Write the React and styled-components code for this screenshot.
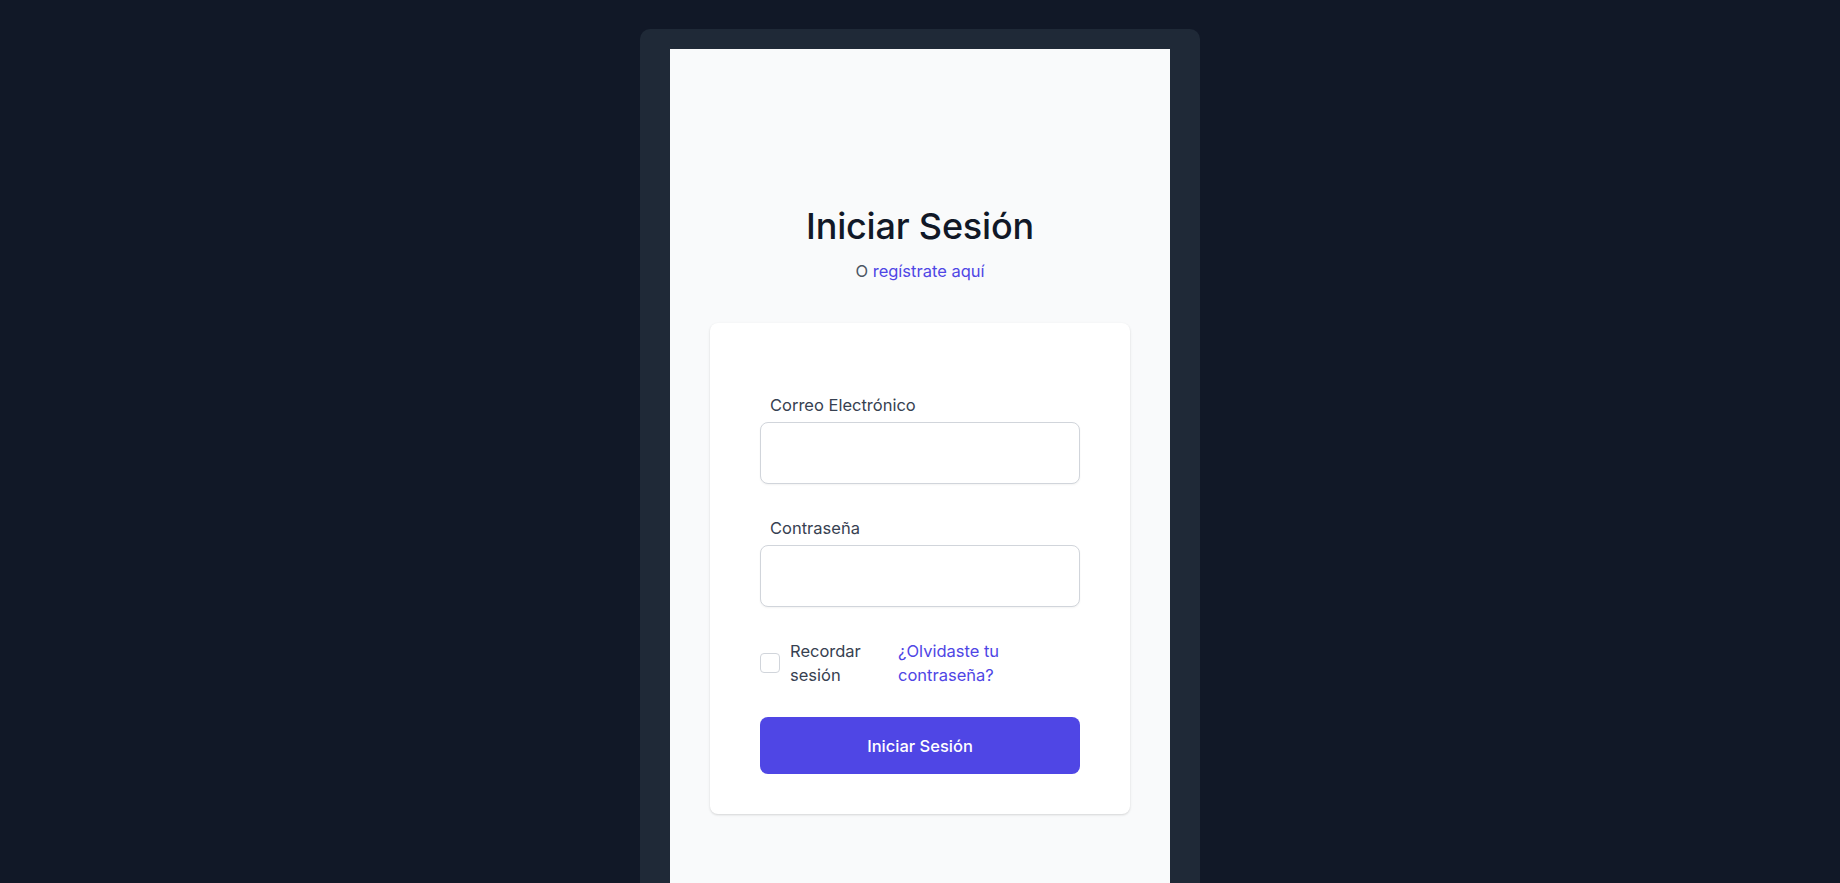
import React from 'react';
import styled, { createGlobalStyle } from 'styled-components';

const GlobalStyle = createGlobalStyle`
  html, body {
    margin: 0;
    padding: 0;
    overflow: hidden;
    background-color: #111827;
    font-family: Inter, 'Noto Sans', 'Liberation Sans', sans-serif;
  }
  * {
    box-sizing: border-box;
  }
`;

const Frame = styled.div`
  width: 560px;
  margin: 29px auto 0;
  padding: 20px 30px 0;
  background-color: #1f2937;
  border-radius: 10px 10px 0 0;
`;

const Screen = styled.main`
  display: flex;
  flex-direction: column;
  align-items: center;
  min-height: 900px;
  padding-top: 157px;
  background-color: #f9fafb;
`;

const Title = styled.h2`
  margin: 0;
  font-size: 36px;
  line-height: 40px;
  font-weight: 500;
  color: #111827;
  letter-spacing: -0.2px;
`;

const Subtitle = styled.p`
  margin: 15px 0 0;
  font-size: 16.5px;
  line-height: 20px;
  color: #4b5563;
`;

const Link = styled.a`
  color: #4f46e5;
  text-decoration: none;
  cursor: pointer;
`;

const Card = styled.form`
  width: 420px;
  margin-top: 42px;
  padding: 70px 50px 40px;
  background-color: #ffffff;
  border-radius: 8px;
  box-shadow: 0 1px 3px rgba(0, 0, 0, 0.1), 0 1px 2px rgba(0, 0, 0, 0.06);
`;

const Field = styled.div`
  display: flex;
  flex-direction: column;
  margin-bottom: ${props => props.gap}px;
`;

const Label = styled.label`
  margin: 0 0 5px 10px;
  font-size: 16.5px;
  line-height: 24px;
  color: #374151;
`;

const Input = styled.input`
  width: 100%;
  height: 62px;
  padding: 0 14px;
  border: 1px solid #d1d5db;
  border-radius: 8px;
  background: #ffffff;
  font-size: 16px;
  box-shadow: 0 1px 2px rgba(0, 0, 0, 0.05);
  outline: none;
`;

const OptionsRow = styled.div`
  display: flex;
  align-items: center;
  gap: 8px;
  margin-bottom: 30px;
`;

const Remember = styled.div`
  display: flex;
  align-items: center;
  gap: 10px;
  width: 130px;
`;

const Checkbox = styled.span`
  flex: none;
  width: 20px;
  height: 20px;
  border: 1px solid #d1d5db;
  border-radius: 4px;
  background: #ffffff;
`;

const OptionText = styled.span`
  font-size: 16.5px;
  line-height: 24px;
  color: #374151;
`;

const ForgotLink = styled(Link)`
  max-width: 132px;
  font-size: 16.5px;
  line-height: 24px;
`;

const SubmitButton = styled.button`
  width: 100%;
  height: 57px;
  border: none;
  border-radius: 8px;
  background-color: #4f46e5;
  color: #ffffff;
  font-family: inherit;
  font-size: 16.5px;
  font-weight: 500;
  cursor: pointer;
`;

export default function App() {
  return (
    <>
      <GlobalStyle />
      <Frame>
        <Screen>
          <Title>Iniciar Sesión</Title>
          <Subtitle>
            O <Link>regístrate aquí</Link>
          </Subtitle>
          <Card onSubmit={e => e.preventDefault()}>
            <Field gap={32}>
              <Label htmlFor="email">Correo Electrónico</Label>
              <Input id="email" type="email" />
            </Field>
            <Field gap={32}>
              <Label htmlFor="password">Contraseña</Label>
              <Input id="password" type="password" />
            </Field>
            <OptionsRow>
              <Remember>
                <Checkbox />
                <OptionText>Recordar sesión</OptionText>
              </Remember>
              <ForgotLink>¿Olvidaste tu contraseña?</ForgotLink>
            </OptionsRow>
            <SubmitButton type="submit">Iniciar Sesión</SubmitButton>
          </Card>
        </Screen>
      </Frame>
    </>
  );
}
